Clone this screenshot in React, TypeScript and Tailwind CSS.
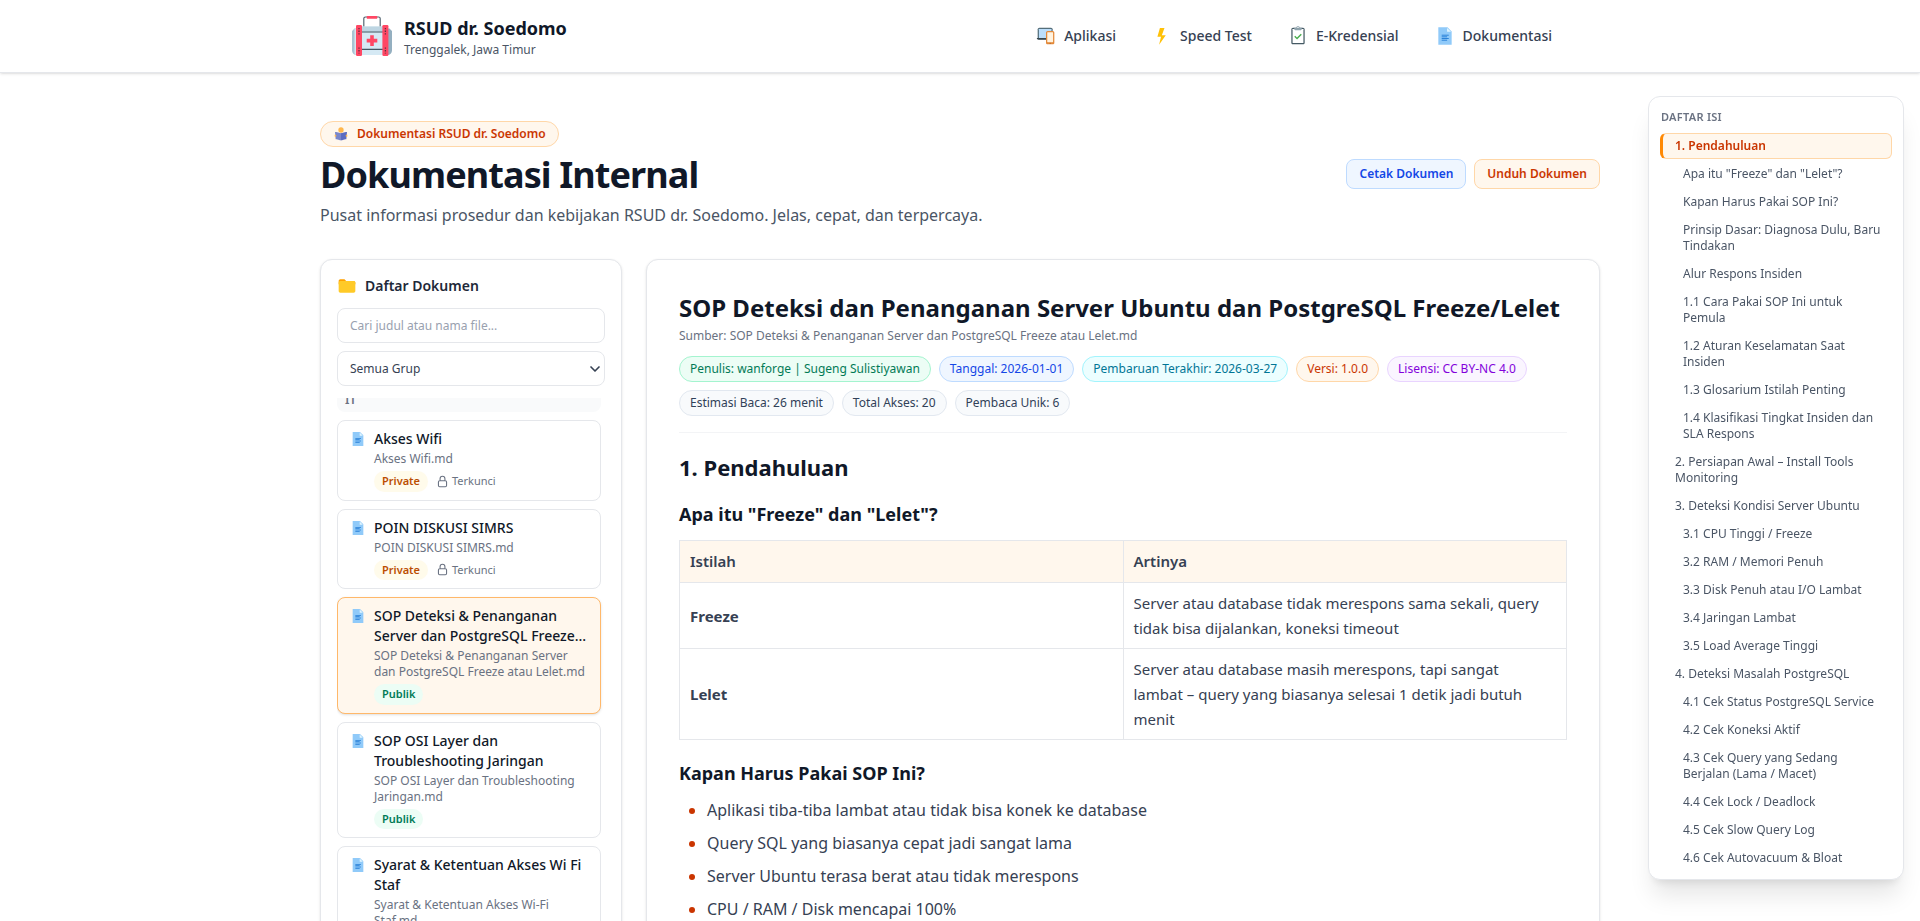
import { useLayoutEffect, useRef } from "react";
import type { ComponentType } from "react";
import { clsx } from "clsx";
import { ChevronDown } from "lucide-react";
import {
  FcDocument,
  FcFlashOn,
  FcFolder,
  FcInspection,
  FcMultipleDevices,
  FcReading,
} from "react-icons/fc";
import { HiOutlineLockClosed } from "react-icons/hi2";

type NavItem = { label: string; icon: ComponentType<{ size?: number }> };

const NAV_ITEMS: NavItem[] = [
  { label: "Aplikasi", icon: FcMultipleDevices },
  { label: "Speed Test", icon: FcFlashOn },
  { label: "E-Kredensial", icon: FcInspection },
  { label: "Dokumentasi", icon: FcDocument },
];

type Doc = { title: string; file: string; access: "private" | "publik"; active?: boolean };

const DOCS: Doc[] = [
  { title: "Akses Wifi", file: "Akses Wifi.md", access: "private" },
  { title: "POIN DISKUSI SIMRS", file: "POIN DISKUSI SIMRS.md", access: "private" },
  {
    title: "SOP Deteksi & Penanganan Server dan PostgreSQL Freeze…",
    file: "SOP Deteksi & Penanganan Server dan PostgreSQL Freeze atau Lelet.md",
    access: "publik",
    active: true,
  },
  {
    title: "SOP OSI Layer dan Troubleshooting Jaringan",
    file: "SOP OSI Layer dan Troubleshooting Jaringan.md",
    access: "publik",
  },
  {
    title: "Syarat & Ketentuan Akses Wi Fi Staf",
    file: "Syarat & Ketentuan Akses Wi-Fi Staf.md",
    access: "publik",
  },
];

const META = [
  { text: "Penulis: wanforge | Sugeng Sulistiyawan", tone: "border-emerald-200 bg-emerald-50 text-emerald-700" },
  { text: "Tanggal: 2026-01-01", tone: "border-blue-200 bg-blue-50 text-blue-700" },
  { text: "Pembaruan Terakhir: 2026-03-27", tone: "border-cyan-200 bg-cyan-50 text-cyan-700" },
  { text: "Versi: 1.0.0", tone: "border-orange-200 bg-orange-50 text-orange-700" },
  { text: "Lisensi: CC BY-NC 4.0", tone: "border-purple-200 bg-purple-50 text-purple-700" },
  { text: "Estimasi Baca: 26 menit", tone: "border-slate-200 bg-slate-50 text-slate-700" },
  { text: "Total Akses: 20", tone: "border-slate-200 bg-slate-50 text-slate-700" },
  { text: "Pembaca Unik: 6", tone: "border-slate-200 bg-slate-50 text-slate-700" },
];

const TERMS = [
  {
    term: "Freeze",
    meaning: "Server atau database tidak merespons sama sekali, query tidak bisa dijalankan, koneksi timeout",
  },
  {
    term: "Lelet",
    meaning: "Server atau database masih merespons, tapi sangat lambat – query yang biasanya selesai 1 detik jadi butuh menit",
  },
];

const SYMPTOMS = [
  "Aplikasi tiba-tiba lambat atau tidak bisa konek ke database",
  "Query SQL yang biasanya cepat jadi sangat lama",
  "Server Ubuntu terasa berat atau tidak merespons",
  "CPU / RAM / Disk mencapai 100%",
];

const TOC: { text: string; level: 2 | 3 }[] = [
  { text: "1. Pendahuluan", level: 2 },
  { text: 'Apa itu "Freeze" dan "Lelet"?', level: 3 },
  { text: "Kapan Harus Pakai SOP Ini?", level: 3 },
  { text: "Prinsip Dasar: Diagnosa Dulu, Baru Tindakan", level: 3 },
  { text: "Alur Respons Insiden", level: 3 },
  { text: "1.1 Cara Pakai SOP Ini untuk Pemula", level: 3 },
  { text: "1.2 Aturan Keselamatan Saat Insiden", level: 3 },
  { text: "1.3 Glosarium Istilah Penting", level: 3 },
  { text: "1.4 Klasifikasi Tingkat Insiden dan SLA Respons", level: 3 },
  { text: "2. Persiapan Awal – Install Tools Monitoring", level: 2 },
  { text: "3. Deteksi Kondisi Server Ubuntu", level: 2 },
  { text: "3.1 CPU Tinggi / Freeze", level: 3 },
  { text: "3.2 RAM / Memori Penuh", level: 3 },
  { text: "3.3 Disk Penuh atau I/O Lambat", level: 3 },
  { text: "3.4 Jaringan Lambat", level: 3 },
  { text: "3.5 Load Average Tinggi", level: 3 },
  { text: "4. Deteksi Masalah PostgreSQL", level: 2 },
  { text: "4.1 Cek Status PostgreSQL Service", level: 3 },
  { text: "4.2 Cek Koneksi Aktif", level: 3 },
  { text: "4.3 Cek Query yang Sedang Berjalan (Lama / Macet)", level: 3 },
  { text: "4.4 Cek Lock / Deadlock", level: 3 },
  { text: "4.5 Cek Slow Query Log", level: 3 },
  { text: "4.6 Cek Autovacuum & Bloat", level: 3 },
];

function MedicalBagLogo() {
  return (
    <svg viewBox="0 0 40 40" className="h-10 w-10 shrink-0" aria-hidden>
      <path d="M11.800 11V2.600A1.600 1.600 0 0 1 13.400 1h13.200A1.600 1.600 0 0 1 28.200 2.600V11" fill="none" stroke="#546672" strokeWidth="1.2" />
      <rect x="14.8" y="0" width="10.4" height="2.8" rx="0.6" fill="#ff4764" />
      <path d="M5 12.500H2.500L0 15v19.500A4.500 4.500 0 0 0 4.500 39H5z" fill="#a9c4d4" />
      <path d="M2.500 12.500H5V39H4a2 2 0 0 1-1.500-2z" fill="#d5e6ef" />
      <path d="M35 12.500h2.500L40 15v19.500a4.500 4.500 0 0 1-4.500 4.500H35z" fill="#94afc0" />
      <rect x="9" y="10.5" width="22" height="28.500" fill="#d5e9f4" />
      <rect x="9" y="10.5" width="22" height="5" fill="#bdd5e2" />
      <path d="M9 16h22M9 33.400h22" stroke="#435661" strokeWidth="1.1" />
      <rect x="4" y="9" width="6" height="31" rx="1.2" fill="#ff4764" />
      <rect x="30.400" y="9" width="6" height="31" rx="1.2" fill="#ff4764" />
      <path d="M7 12v7M33.400 12v7M7 31.500v6M33.400 31.500v6" stroke="#63303f" strokeWidth="1.3" strokeDasharray="1.3 1.3" />
      <path d="M18.200 19.300h3.600v3.500h3.500v3.600h-3.500v3.500h-3.600v-3.500h-3.500v-3.600h3.500z" fill="#ff4764" />
    </svg>
  );
}

function SiteHeader() {
  return (
    <header className="border-b border-gray-200 bg-white shadow-sm">
      <div className="mx-auto flex h-18 max-w-7xl items-center justify-between px-8">
        <a href="#beranda" className="flex items-center gap-3">
          <MedicalBagLogo />
          <span className="flex flex-col">
            <span className="text-lg font-bold text-gray-900">RSUD dr. Soedomo</span>
            <span className="text-xs text-gray-600">Trenggalek, Jawa Timur</span>
          </span>
        </a>
        <nav className="flex items-center gap-1">
          {NAV_ITEMS.map(({ label, icon: Icon }) => (
            <a
              key={label}
              href={`#${label.toLowerCase().replace(" ", "-")}`}
              className="flex items-center gap-2 rounded-lg px-4 py-2 text-sm font-medium text-gray-700"
            >
              <Icon size={20} />
              {label}
            </a>
          ))}
        </nav>
      </div>
    </header>
  );
}

function PageHeading() {
  return (
    <div className="flex items-center justify-between">
      <div className="flex flex-col items-start gap-2">
        <span className="inline-flex items-center gap-2 rounded-full border border-orange-200 bg-orange-50 px-3 py-1 text-xs font-semibold text-orange-700">
          <FcReading size={16} />
          Dokumentasi RSUD dr. Soedomo
        </span>
        <h1 className="text-4xl font-bold tracking-tight text-gray-900">Dokumentasi Internal</h1>
        <p className="text-gray-600">
          Pusat informasi prosedur dan kebijakan RSUD dr. Soedomo. Jelas, cepat, dan terpercaya.
        </p>
      </div>
      <div className="flex gap-2">
        <button
          type="button"
          className="rounded-lg border border-blue-200 bg-blue-50 px-3 py-1.5 text-xs font-semibold text-blue-700"
        >
          Cetak Dokumen
        </button>
        <button
          type="button"
          className="rounded-lg border border-orange-200 bg-orange-50 px-3 py-1.5 text-xs font-semibold text-orange-700"
        >
          Unduh Dokumen
        </button>
      </div>
    </div>
  );
}

function DocCard({ doc }: { doc: Doc }) {
  const isPrivate = doc.access === "private";
  return (
    <a
      href="#dokumen"
      className={clsx(
        "flex shrink-0 items-start gap-2 rounded-lg border px-3 py-2",
        doc.active ? "border-orange-300 bg-orange-50 shadow-sm" : "border-gray-200 bg-white"
      )}
    >
      <span className="mt-0.5 shrink-0">
        <FcDocument size={16} />
      </span>
      <span className="min-w-0 flex-1">
        <span className="block text-sm font-medium text-gray-900">{doc.title}</span>
        <span className="mt-0.5 block text-xs text-gray-500">{doc.file}</span>
        <span className="mt-1 flex items-center gap-2 text-[11px]">
          <span
            className={clsx(
              "rounded-full px-2 py-0.5 font-semibold",
              isPrivate ? "bg-amber-50 text-amber-700" : "bg-emerald-50 text-emerald-700"
            )}
          >
            {isPrivate ? "Private" : "Publik"}
          </span>
          {isPrivate && (
            <span className="flex items-center gap-[3px] text-gray-500">
              <HiOutlineLockClosed size={13} strokeWidth={2} />
              Terkunci
            </span>
          )}
        </span>
      </span>
    </a>
  );
}

function DocSidebar() {
  const listRef = useRef<HTMLDivElement>(null);

  useLayoutEffect(() => {
    if (listRef.current) listRef.current.scrollTop = 10;
  }, []);

  return (
    <aside className="col-span-3 rounded-xl border border-gray-200 bg-white p-4 shadow-sm">
      <h2 className="flex items-center gap-2 text-sm font-semibold text-gray-800">
        <FcFolder size={20} />
        Daftar Dokumen
      </h2>
      <div className="mt-3 flex flex-col gap-2">
        <input
          type="search"
          aria-label="Cari dokumen"
          placeholder="Cari judul atau nama file..."
          className="h-[35px] w-full rounded-lg border border-gray-200 px-3 text-xs text-gray-700 placeholder:text-gray-400"
        />
        <div className="relative">
          <select
            aria-label="Grup dokumen"
            className="block h-[35px] w-full appearance-none rounded-lg border border-gray-200 bg-white px-3 text-xs text-gray-700"
          >
            <option>Semua Grup</option>
            <option>IT</option>
          </select>
          <ChevronDown
            size={16}
            strokeWidth={2.5}
            className="pointer-events-none absolute inset-y-0 right-0.5 my-auto text-gray-700"
          />
        </div>
      </div>
      <div
        ref={listRef}
        className="mt-3 flex max-h-[540px] flex-col gap-2 overflow-y-auto pr-1 [scrollbar-width:none]"
      >
        <div className="shrink-0 rounded-lg bg-gray-50 px-2 py-1 text-xs font-semibold text-gray-500">IT</div>
        {DOCS.map((doc) => (
          <DocCard key={doc.title} doc={doc} />
        ))}
      </div>
    </aside>
  );
}

function DocArticle() {
  return (
    <article className="col-span-9 rounded-xl border border-gray-200 bg-white p-8 shadow-sm">
      <div className="border-b border-gray-100 pb-4">
        <h2 className="text-2xl font-bold text-gray-900">
          SOP Deteksi dan Penanganan Server Ubuntu dan PostgreSQL Freeze/Lelet
        </h2>
        <p className="mt-1 text-xs text-gray-500">
          Sumber: SOP Deteksi &amp; Penanganan Server dan PostgreSQL Freeze atau Lelet.md
        </p>
        <div className="mt-3 flex flex-wrap gap-2">
          {META.map((item) => (
            <span key={item.text} className={clsx("rounded-full border px-2.5 py-1 text-xs", item.tone)}>
              {item.text}
            </span>
          ))}
        </div>
      </div>

      <h3 className="mt-5 text-[22px] leading-7 font-bold text-gray-900">1. Pendahuluan</h3>

      <h4 className="mt-[19px] text-lg font-bold text-gray-900">Apa itu &quot;Freeze&quot; dan &quot;Lelet&quot;?</h4>
      <table className="mt-3 w-full table-fixed border-collapse text-[15px] leading-[25px] text-gray-700">
        <thead>
          <tr className="bg-orange-50 text-left">
            <th className="border border-gray-200 px-2.5 py-2 font-semibold">Istilah</th>
            <th className="border border-gray-200 px-2.5 py-2 font-semibold">Artinya</th>
          </tr>
        </thead>
        <tbody>
          {TERMS.map(({ term, meaning }) => (
            <tr key={term}>
              <td className="border border-gray-200 pt-2 pr-5 pb-[7px] pl-2.5 font-bold">{term}</td>
              <td className="border border-gray-200 pt-2 pr-5 pb-[7px] pl-2.5">{meaning}</td>
            </tr>
          ))}
        </tbody>
      </table>

      <h4 className="mt-[19px] text-lg font-bold text-gray-900">Kapan Harus Pakai SOP Ini?</h4>
      <ul className="mt-2.5 flex list-disc flex-col gap-1.5 pl-7 leading-[27px] text-gray-700 marker:text-orange-700">
        {SYMPTOMS.map((text) => (
          <li key={text}>{text}</li>
        ))}
      </ul>
    </article>
  );
}

function TableOfContents() {
  return (
    <aside className="fixed top-24 right-4 w-64 rounded-xl border border-gray-200 bg-white p-3 pb-2 shadow-xl">
      <p className="text-[11px] leading-4 font-semibold tracking-wide text-gray-500 uppercase">Daftar Isi</p>
      <nav className="-mx-px mt-2 flex flex-col gap-0.5">
        {TOC.map(({ text, level }, i) => (
          <a
            key={text}
            href="#dokumen"
            className={clsx(
              "rounded-md border border-l-3 py-1 pr-2 text-xs",
              level === 3 ? "pl-5" : "pl-3",
              i === 0
                ? "border-orange-200 border-l-orange-400 bg-orange-50 font-semibold text-orange-700"
                : "border-transparent text-gray-600"
            )}
          >
            {text}
          </a>
        ))}
      </nav>
    </aside>
  );
}

export default function App() {
  return (
    <div className="h-screen overflow-y-auto bg-white font-['Noto_Sans',sans-serif] [scrollbar-width:none]">
      <SiteHeader />
      <main className="mx-auto max-w-7xl py-12">
        <PageHeading />
        <div className="mt-8 grid grid-cols-12 gap-6">
          <DocSidebar />
          <DocArticle />
        </div>
      </main>
      <TableOfContents />
    </div>
  );
}
